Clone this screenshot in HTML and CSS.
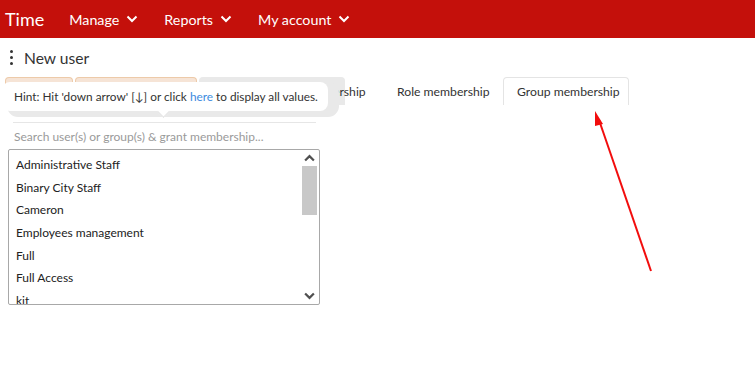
FILE: index.html
```html
<!DOCTYPE html>
<html>
<head>
    <title>Time - New user</title>
    <link rel="stylesheet" href="styles.css">
</head>
<body>
    <div id="topbar">
        <div class="brand">Time</div>
        <div class="nav-item">Manage <svg class="chev" viewBox="0 0 12 8"><path d="M1.5 1.5 L6 6 L10.5 1.5"/></svg></div>
        <div class="nav-item">Reports <svg class="chev" viewBox="0 0 12 8"><path d="M1.5 1.5 L6 6 L10.5 1.5"/></svg></div>
        <div class="nav-item">My account <svg class="chev" viewBox="0 0 12 8"><path d="M1.5 1.5 L6 6 L10.5 1.5"/></svg></div>
    </div>

    <div id="page">
        <div class="page-title">
            <span class="kebab"><i></i><i></i><i></i></span>
            New user
        </div>

        <div class="tabs">
            <div class="tab tab-done tab-first">Details</div>
            <div class="tab tab-done tab-second">Password</div>
            <div class="tab tab-gray">User membership</div>
            <div class="tab tab-role">Role membership</div>
            <div class="tab tab-active">Group membership</div>
        </div>

        <div class="hint">
            Hint: Hit 'down arrow' [&darr;] or click&nbsp;<a href="#">here</a>&nbsp;to display all values.
            <span class="hint-arrow"></span>
        </div>

        <div class="picker">
            <div class="search">Search user(s) or group(s) &amp; grant membership...</div>
            <div class="listbox">
                <div class="options">
                    <div class="option">Administrative Staff</div>
                    <div class="option">Binary City Staff</div>
                    <div class="option">Cameron</div>
                    <div class="option">Employees management</div>
                    <div class="option">Full</div>
                    <div class="option">Full Access</div>
                    <div class="option">kit</div>
                </div>
                <div class="scrollbar">
                    <svg class="scroll-btn" viewBox="0 0 10 8"><path d="M1.5 6 L5 2.5 L8.5 6"/></svg>
                    <div class="scroll-track"><div class="scroll-thumb"></div></div>
                    <svg class="scroll-btn" viewBox="0 0 10 8"><path d="M1.5 2 L5 5.5 L8.5 2"/></svg>
                </div>
            </div>
        </div>
    </div>

    <svg class="callout" width="755" height="380" viewBox="0 0 755 380">
        <line x1="651" y1="271" x2="599" y2="120" stroke="#f20d0d" stroke-width="2"/>
        <polygon points="595,111 603,124 595,126" fill="#f20d0d"/>
    </svg>
</body>
</html>
```

FILE: styles.css
```css
body {
    margin: 0;
    font-family: Lato, "Open Sans", sans-serif;
    background-color: #fff;
    color: #222;
    width: 755px;
    height: 380px;
    overflow: hidden;
    position: relative;
}

#topbar {
    height: 38px;
    background-color: #c4100b;
    display: flex;
    align-items: center;
    color: #fff;
}

.brand {
    font-size: 18px;
    padding: 0 25px 0 5px;
}

.nav-item {
    font-size: 14.3px;
    display: flex;
    align-items: center;
    margin-right: 26px;
}

.chev {
    width: 12px;
    height: 8px;
    margin-left: 7px;
    fill: none;
    stroke: #fff;
    stroke-width: 2;
}

#page {
    position: relative;
    padding: 0 5px;
}

.page-title {
    display: flex;
    align-items: center;
    font-size: 15.6px;
    color: #333;
    height: 39px;
    padding-left: 3px;
}

.kebab {
    display: flex;
    flex-direction: column;
    gap: 3px;
    margin: 0 11px 0 2px;
}

.kebab i {
    width: 3px;
    height: 3px;
    border-radius: 50%;
    background-color: #333;
}

.tabs {
    display: flex;
    gap: 2px;
    height: 28px;
}

.tab {
    box-sizing: border-box;
    font-size: 12.2px;
    color: #333;
    display: flex;
    align-items: center;
    padding: 0 13px;
    border: 1px solid transparent;
    border-bottom: none;
    border-radius: 4px 4px 0 0;
    white-space: nowrap;
}

.tab-done {
    background-color: #f6e4d6;
    border-color: #edcaa9;
}

.tab-first {
    width: 68px;
}

.tab-second {
    width: 122px;
}

.tab-gray {
    width: 146px;
    padding-left: 72px;
    margin-right: 36px;
    background-color: #e9e9e9;
    border-color: #e9e9e9;
}

.tab-role {
    width: 118px;
}

.tab-active {
    width: 126px;
    background-color: #fff;
    border-color: #e4e4e4;
}

.hint {
    position: absolute;
    left: 2px;
    top: 44px;
    width: 326px;
    height: 29px;
    box-sizing: border-box;
    padding-left: 12px;
    display: flex;
    align-items: center;
    font-size: 11.8px;
    color: #333;
    background-color: #fff;
    border-radius: 8px;
    box-shadow: 8px 3px 0 3px #e9e9e9;
    white-space: nowrap;
}

.hint a {
    color: #3c8be0;
    text-decoration: none;
}

.hint-arrow {
    position: absolute;
    left: 157px;
    bottom: -5px;
    width: 8px;
    height: 8px;
    background-color: #fff;
    transform: rotate(45deg);
    border-right: 1px solid #e2e2e2;
    border-bottom: 1px solid #e2e2e2;
}

.picker {
    padding-top: 17px;
    width: 312px;
    margin-left: 3px;
}

.search {
    margin-left: 5px;
    width: 302px;
    border-top: 1px solid #e6e6e6;
    font-size: 12px;
    color: #9a9a9a;
    padding: 6px 0 0 1px;
    height: 19px;
}

.listbox {
    margin-top: 1px;
    height: 154px;
    border: 1px solid #a8a8a8;
    border-radius: 2px;
    display: flex;
    overflow: hidden;
}

.options {
    flex: 1;
    padding-top: 4px;
}

.option {
    font-size: 12px;
    color: #222;
    height: 22.7px;
    line-height: 22.7px;
    padding-left: 7px;
}

.scrollbar {
    width: 15px;
    margin-right: 2px;
    display: flex;
    flex-direction: column;
    padding: 3px 0;
}

.scroll-btn {
    width: 15px;
    height: 10px;
    fill: none;
    stroke: #505050;
    stroke-width: 1.8;
}

.scroll-track {
    flex: 1;
    padding-top: 3px;
}

.scroll-thumb {
    height: 49px;
    background-color: #c8c8c8;
}

.callout {
    position: absolute;
    left: 0;
    top: 0;
    pointer-events: none;
}
```
